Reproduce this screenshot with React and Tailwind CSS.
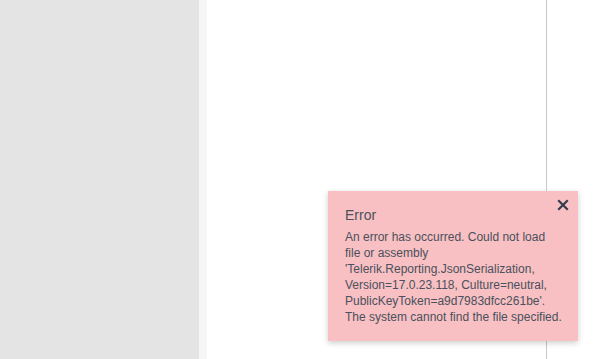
export default function App() {
  return (
    <div className="relative flex h-[359px] w-[594px] overflow-hidden bg-white font-['Liberation_Sans',Arial,sans-serif]">
      <aside className="w-[199px] shrink-0 bg-[#e4e4e4]" />
      <div className="w-[8px] shrink-0 bg-[#f6f6f6]" />
      <main className="w-[340px] shrink-0 border-r border-[#c9c9c9] bg-white" />
      <div className="flex-1 bg-white" />

      <div className="absolute left-[328px] top-[191px] h-[150px] w-[250px] bg-[#f8c0c2] pl-[17px] pt-[15px] text-[#4a505d] shadow-[0_2px_6px_rgba(0,0,0,0.2)]">
        <button className="absolute right-[9px] top-[8px] text-[#333c4e]">
          <svg width="12" height="12" viewBox="0 0 12 12">
            <path d="M2 2L10 10M10 2L2 10" stroke="currentColor" strokeWidth="2.2" strokeLinecap="square" />
          </svg>
        </button>
        <div className="text-[14px] leading-[18px]">Error</div>
        <p className="mt-[5px] w-[218px] text-[12px] leading-[16px]">
          An error has occurred. Could not load file or assembly 'Telerik.Reporting.JsonSerialization, Version=17.0.23.118, Culture=neutral, PublicKeyToken=a9d7983dfcc261be'. The system cannot find the file specified.
        </p>
      </div>
    </div>
  );
}
